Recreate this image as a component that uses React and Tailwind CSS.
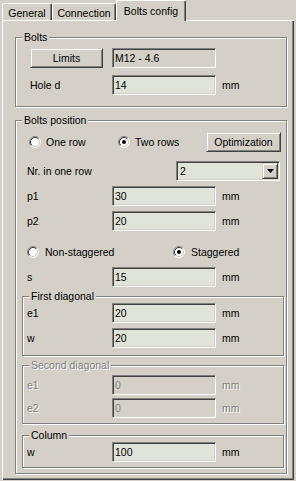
import React from "react";

function Field({ value, variant = "edit" }) {
  const bg =
    variant === "disabled"
      ? "bg-[#d4d0c8] text-[#808080]"
      : variant === "readonly"
      ? "bg-[#d4d0c8] text-black"
      : "bg-[#e0e4d8] text-black";
  return (
    <div
      className={`h-[20px] w-[104px] shrink-0 flex items-center pl-[2px] border border-t-[#808080] border-l-[#808080] border-r-white border-b-white shadow-[inset_1px_1px_0_#404040,inset_-1px_-1px_0_#d4d0c8] ${bg}`}
    >
      {value}
    </div>
  );
}

function Btn({ children, className = "" }) {
  return (
    <div
      className={`flex items-center justify-center border border-t-[#d4d0c8] border-l-[#d4d0c8] border-r-[#404040] border-b-[#404040] shadow-[inset_1px_1px_0_#fff,inset_-1px_-1px_0_#808080] bg-[#d4d0c8] ${className}`}
    >
      {children}
    </div>
  );
}

function Radio({ checked }) {
  return (
    <svg width="12" height="12" viewBox="0 0 12 12" className="shrink-0">
      <circle cx="6" cy="6" r="4.2" fill="#fff" />
      <path d="M2.11 9.89 A5.5 5.5 0 0 1 9.89 2.11" fill="none" stroke="#808080" />
      <path d="M9.89 2.11 A5.5 5.5 0 0 1 2.11 9.89" fill="none" stroke="#fff" />
      <path d="M2.82 9.18 A4.5 4.5 0 0 1 9.18 2.82" fill="none" stroke="#404040" />
      <path d="M9.18 2.82 A4.5 4.5 0 0 1 2.82 9.18" fill="none" stroke="#d4d0c8" />
      {checked && <circle cx="6" cy="6" r="2" fill="#000" />}
    </svg>
  );
}

function Group({ title, disabled, className = "", children }) {
  return (
    <div
      className={`relative border border-[#808080] shadow-[inset_1px_1px_0_#fff,1px_1px_0_#fff] ${className}`}
    >
      <span
        className={`absolute -top-[7px] left-[6px] px-[2px] bg-[#d4d0c8] leading-[12px] ${
          disabled ? "text-[#808080] [text-shadow:1px_1px_0_#fff]" : "text-black"
        }`}
      >
        {title}
      </span>
      {children}
    </div>
  );
}

function Row({ label, value, variant, disabled, className = "" }) {
  const dis = disabled ? "text-[#808080] [text-shadow:1px_1px_0_#fff]" : "";
  return (
    <div className={`h-[20px] flex items-center ${className}`}>
      <span className={`w-[85px] shrink-0 ${dis}`}>{label}</span>
      <Field value={value} variant={variant} />
      <span className={`ml-[6px] ${dis}`}>mm</span>
    </div>
  );
}

function Tab({ children, selected, className = "" }) {
  if (selected) {
    return (
      <div
        className={`relative z-10 h-[21px] -mb-[1px] flex items-start justify-center pt-[4px] bg-[#d4d0c8] border-l border-t border-l-white border-t-white border-r border-r-[#404040] shadow-[inset_-1px_0_0_#808080] rounded-t-[2px] ${className}`}
      >
        {children}
      </div>
    );
  }
  return (
    <div
      className={`h-[17px] flex items-start justify-center pt-[3px] bg-[#d4d0c8] border-l border-t border-l-white border-t-white border-r border-r-[#404040] shadow-[inset_-1px_0_0_#808080] rounded-t-[2px] ${className}`}
    >
      {children}
    </div>
  );
}

export default function App() {
  return (
    <div className="w-[296px] h-[481px] bg-[#d4d0c8] text-black text-[10.5px] leading-[12px] font-['Liberation_Sans',Arial,sans-serif] overflow-hidden">
      <div className="h-[20px] flex items-end pl-[2px]">
        <Tab className="w-[50px]">General</Tab>
        <Tab className="w-[64px]">Connection</Tab>
        <Tab selected className="w-[70px]">
          Bolts config
        </Tab>
      </div>
      <div className="relative w-[292px] h-[460px] ml-[2px] pt-[17px] shadow-[inset_1px_1px_0_#fff,inset_-1px_-1px_0_#404040,inset_-2px_-2px_0_#808080]">
        <Group title="Bolts" className="ml-[13px] w-[272px] pt-[10px] pb-[11px] pl-[14px]">
          <div className="h-[20px] flex items-center">
            <div className="w-[82px] shrink-0">
              <Btn className="w-[73px] h-[20px]">Limits</Btn>
            </div>
            <Field value="M12 - 4.6" variant="readonly" />
          </div>
          <div className="h-[20px] flex items-center mt-[7px]">
            <span className="w-[82px] shrink-0">Hole d</span>
            <Field value="14" />
            <span className="ml-[6px]">mm</span>
          </div>
        </Group>

        <Group title="Bolts position" className="ml-[13px] mt-[13px] w-[272px] pt-[11px] pb-[5px]">
          <div className="h-[20px] flex items-center pl-[13px]">
            <div className="w-[89px] shrink-0 flex items-center gap-[5px]">
              <Radio />
              <span>One row</span>
            </div>
            <div className="w-[88px] shrink-0 flex items-center gap-[5px]">
              <Radio checked />
              <span>Two rows</span>
            </div>
            <Btn className="w-[75px] h-[20px]">Optimization</Btn>
          </div>
          <div className="h-[20px] flex items-center pl-[11px] mt-[9px]">
            <span className="w-[149px] shrink-0">Nr. in one row</span>
            <div className="h-[20px] w-[104px] shrink-0 flex items-center border border-t-[#808080] border-l-[#808080] border-r-white border-b-white shadow-[inset_1px_1px_0_#404040,inset_-1px_-1px_0_#d4d0c8] bg-[#e0e4d8] p-[1px]">
              <span className="flex-1 pl-[2px]">2</span>
              <Btn className="w-[16px] h-[16px]">
                <svg width="7" height="4" viewBox="0 0 7 4">
                  <path d="M0 0H7L3.5 4Z" fill="#000" />
                </svg>
              </Btn>
            </div>
          </div>
          <Row label="p1" value="30" className="pl-[11px] mt-[5px]" />
          <Row label="p2" value="20" className="pl-[11px] mt-[5px]" />
          <div className="h-[20px] flex items-center pl-[11px] mt-[11px]">
            <div className="w-[146px] shrink-0 flex items-center gap-[6px]">
              <Radio />
              <span>Non-staggered</span>
            </div>
            <div className="flex items-center gap-[6px]">
              <Radio checked />
              <span>Staggered</span>
            </div>
          </div>
          <Row label="s" value="15" className="pl-[11px] mt-[5px]" />

          <Group title="First diagonal" className="ml-[6px] mt-[9px] w-[262px] pl-[4px] pb-[7px]">
            <Row label="e1" value="20" className="mt-[6px]" />
            <Row label="w" value="20" className="mt-[5px]" />
          </Group>

          <Group title="Second diagonal" disabled className="ml-[6px] mt-[9px] w-[262px] pl-[4px] pb-[5px]">
            <Row label="e1" value="0" variant="disabled" disabled className="mt-[9px]" />
            <Row label="e2" value="0" variant="disabled" disabled className="mt-[3px]" />
          </Group>

          <Group title="Column" className="ml-[6px] mt-[11px] w-[262px] pl-[4px] pb-[5px]">
            <Row label="w" value="100" className="mt-[6px]" />
          </Group>
        </Group>
      </div>
    </div>
  );
}
